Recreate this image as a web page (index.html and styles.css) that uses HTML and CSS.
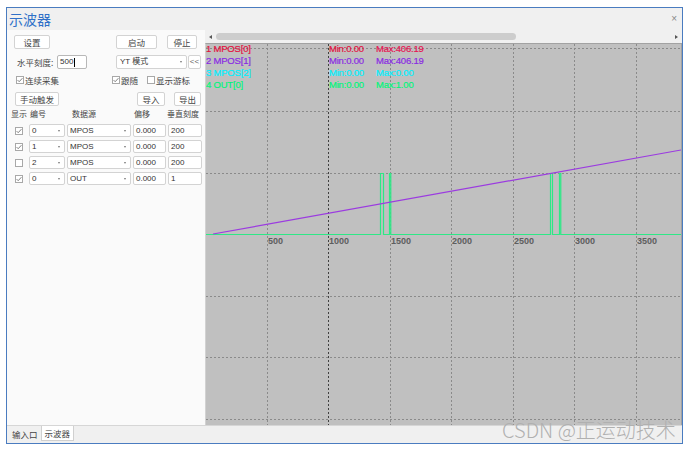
FILE: index.html
```html
<!DOCTYPE html>
<html lang="zh">
<head>
<meta charset="utf-8">
<title>示波器</title>
<link rel="stylesheet" href="styles.css">
</head>
<body>
<div class="window">
  <div class="titlebar">
    <span class="title">示波器</span>
    <span class="close">×</span>
  </div>
  <div class="main">
    <div class="panel">
      <div class="row row1">
        <span class="btn b-set">设置</span>
        <span class="btn b-start">启动</span>
        <span class="btn b-stop">停止</span>
      </div>
      <div class="row row2">
        <span class="lbl">水平刻度:</span>
        <span class="input in-scale">500<i class="caret"></i></span>
        <span class="select sel-mode">YT 模式<i class="arr"></i></span>
        <span class="btn b-collapse">&lt;&lt;</span>
      </div>
      <div class="row row3">
        <label class="chk c-cont"><svg class="cb" width="8" height="8" viewBox="0 0 8 8"><rect x="0.5" y="0.5" width="7" height="7" fill="#fff" stroke="#a8a8a8"/><path d="M1.6 4.1 L3.2 5.7 L6.4 2.2" fill="none" stroke="#707070" stroke-width="0.9"/></svg>连续采集</label>
        <label class="chk c-follow"><svg class="cb" width="8" height="8" viewBox="0 0 8 8"><rect x="0.5" y="0.5" width="7" height="7" fill="#fff" stroke="#a8a8a8"/><path d="M1.6 4.1 L3.2 5.7 L6.4 2.2" fill="none" stroke="#707070" stroke-width="0.9"/></svg>跟随</label>
        <label class="chk c-cursor"><svg class="cb" width="8" height="8" viewBox="0 0 8 8"><rect x="0.5" y="0.5" width="7" height="7" fill="#fff" stroke="#a8a8a8"/></svg>显示游标</label>
      </div>
      <div class="row row4">
        <span class="btn b-trig">手动触发</span>
        <span class="btn b-imp">导入</span>
        <span class="btn b-exp">导出</span>
      </div>
      <div class="grid head">
        <span class="h h1">显示</span>
        <span class="h h2">编号</span>
        <span class="h h3">数据源</span>
        <span class="h h4">偏移</span>
        <span class="h h5">垂直刻度</span>
      </div>
      <div class="grid rows">
        <span class="cbcell"><svg width="8" height="8" viewBox="0 0 8 8"><rect x="0.5" y="0.5" width="7" height="7" fill="#fff" stroke="#a8a8a8"/><path d="M1.6 4.1 L3.2 5.7 L6.4 2.2" fill="none" stroke="#707070" stroke-width="0.9"/></svg></span>
        <span class="select">0<i class="arr"></i></span>
        <span class="select">MPOS<i class="arr"></i></span>
        <span class="input">0.000</span>
        <span class="input">200</span>

        <span class="cbcell"><svg width="8" height="8" viewBox="0 0 8 8"><rect x="0.5" y="0.5" width="7" height="7" fill="#fff" stroke="#a8a8a8"/><path d="M1.6 4.1 L3.2 5.7 L6.4 2.2" fill="none" stroke="#707070" stroke-width="0.9"/></svg></span>
        <span class="select">1<i class="arr"></i></span>
        <span class="select">MPOS<i class="arr"></i></span>
        <span class="input">0.000</span>
        <span class="input">200</span>

        <span class="cbcell"><svg width="8" height="8" viewBox="0 0 8 8"><rect x="0.5" y="0.5" width="7" height="7" fill="#fff" stroke="#a8a8a8"/></svg></span>
        <span class="select">2<i class="arr"></i></span>
        <span class="select">MPOS<i class="arr"></i></span>
        <span class="input">0.000</span>
        <span class="input">200</span>

        <span class="cbcell"><svg width="8" height="8" viewBox="0 0 8 8"><rect x="0.5" y="0.5" width="7" height="7" fill="#fff" stroke="#a8a8a8"/><path d="M1.6 4.1 L3.2 5.7 L6.4 2.2" fill="none" stroke="#707070" stroke-width="0.9"/></svg></span>
        <span class="select">0<i class="arr"></i></span>
        <span class="select">OUT<i class="arr"></i></span>
        <span class="input">0.000</span>
        <span class="input">1</span>
      </div>
    </div>
    <div class="scope">
      <div class="scrollrow">
        <i class="sarrow left"></i>
        <span class="thumb"></span>
        <i class="sarrow right"></i>
      </div>
      <div class="chart">
        <svg class="plot" width="475" height="381" viewBox="0 0 475 381">
          <g stroke="#8a8a8a" stroke-width="1" stroke-dasharray="2 2" fill="none">
            <line x1="0" y1="4.5" x2="475" y2="4.5"/>
            <line x1="0" y1="67.5" x2="475" y2="67.5"/>
            <line x1="0" y1="129.5" x2="475" y2="129.5"/>
            <line x1="0" y1="252.5" x2="475" y2="252.5"/>
            <line x1="0" y1="313.5" x2="475" y2="313.5"/>
            <line x1="0" y1="375.5" x2="475" y2="375.5"/>
            <line x1="61.5" y1="0" x2="61.5" y2="381"/>
            <line x1="184.5" y1="0" x2="184.5" y2="381"/>
            <line x1="245.5" y1="0" x2="245.5" y2="381"/>
            <line x1="307.5" y1="0" x2="307.5" y2="381"/>
            <line x1="368.5" y1="0" x2="368.5" y2="381"/>
            <line x1="430.5" y1="0" x2="430.5" y2="381"/>
          </g>
          <line x1="122.5" y1="0" x2="122.5" y2="381" stroke="#404040" stroke-dasharray="2 2"/>
          <polyline fill="none" stroke="#2ee886" stroke-width="1.2" points="0,190.5 174.5,190.5 174.5,129.5 177.5,129.5 177.5,190.5 183.5,190.5 183.5,129.5 184.8,129.5 184.8,190.5 344.5,190.5 344.5,129.5 346.5,129.5 346.5,190.5 353.5,190.5 353.5,129.5 354.8,129.5 354.8,190.5 475,190.5"/>
          <line x1="7" y1="190" x2="475" y2="106" stroke="#9b3be0" stroke-width="1.2"/>
          <g class="ax" fill="#5e5e5e">
            <text x="62" y="199.5">500</text>
            <text x="123" y="199.5">1000</text>
            <text x="185" y="199.5">1500</text>
            <text x="246" y="199.5">2000</text>
            <text x="308" y="199.5">2500</text>
            <text x="369" y="199.5">3000</text>
            <text x="431" y="199.5">3500</text>
          </g>
          <g class="lg">
            <text x="0" y="7.5" fill="#e2123f" stroke="#e2123f">1 MPOS[0]</text>
            <text x="123" y="7.5" fill="#e2123f" stroke="#e2123f">Min:0.00</text>
            <text x="170" y="7.5" fill="#e61552" stroke="#e61552">Max:406.19</text>
            <text x="0" y="19.5" fill="#8a2be2" stroke="#8a2be2">2 MPOS[1]</text>
            <text x="123" y="19.5" fill="#8a2be2" stroke="#8a2be2">Min:0.00</text>
            <text x="170" y="19.5" fill="#8a2be2" stroke="#8a2be2">Max:406.19</text>
            <text x="0" y="31.5" fill="#00f0ff" stroke="#00f0ff">3 MPOS[2]</text>
            <text x="123" y="31.5" fill="#00f0ff" stroke="#00f0ff">Min:0.00</text>
            <text x="170" y="31.5" fill="#00f0ff" stroke="#00f0ff">Max:0.00</text>
            <text x="0" y="43.5" fill="#00f57a" stroke="#00f57a">4 OUT[0]</text>
            <text x="123" y="43.5" fill="#00f57a" stroke="#00f57a">Min:0.00</text>
            <text x="170" y="43.5" fill="#00f57a" stroke="#00f57a">Max:1.00</text>
          </g>
        </svg>
      </div>
    </div>
  </div>
  <div class="tabs">
    <span class="tab">输入口</span>
    <span class="tab active">示波器</span>
  </div>
</div>
<div class="watermark">CSDN @正运动技术</div>
</body>
</html>
```
FILE: styles.css
```css
* { box-sizing: border-box; }
html, body { margin: 0; padding: 0; background: #fff; }
body {
  font-family: "Liberation Sans", "Noto Sans CJK SC", sans-serif;
  font-size: 9px;
  color: #333;
  position: relative;
  width: 690px;
  height: 451px;
  overflow: hidden;
}
.window {
  margin: 7px 0 0 6px;
  width: 677px;
  height: 437px;
  border: 1px solid #4a7cc0;
  background: #f0f0f0;
  display: flex;
  flex-direction: column;
}
.titlebar {
  height: 22px;
  display: flex;
  align-items: center;
  flex: none;
}
.title {
  margin-left: 2px;
  font-family: "Noto Sans CJK SC", sans-serif;
  font-size: 14px;
  color: #2f70c8;
  line-height: 1;
}
.close {
  margin-left: auto;
  margin-right: 5px;
  font-size: 10px;
  color: #888;
  line-height: 1;
}
.main {
  height: 395px;
  display: flex;
  flex: none;
}
.panel {
  width: 198px;
  background: #fafafa;
  display: flex;
  flex-direction: column;
  padding-top: 5px;
}
.row {
  display: flex;
  align-items: center;
  height: 14px;
  flex: none;
}
.row2, .row4 { margin-top: 6px; }
.row3 { margin-top: 5px; height: 12px; }
.row4 { margin-top: 6px; }
.btn {
  display: flex;
  align-items: center;
  justify-content: center;
  height: 14px;
  background: #fff;
  border: 1px solid #d3d3d3;
  border-radius: 2px;
  font-family: "Noto Sans CJK SC", sans-serif;
  font-size: 8.5px;
  color: #444;
  line-height: 1;
}
.b-set { margin-left: 7px; width: 36px; }
.b-start { margin-left: 66px; width: 41px; }
.b-stop { margin-left: 10px; width: 30px; }
.lbl {
  margin-left: 10px;
  width: 40px;
  font-family: "Noto Sans CJK SC", sans-serif;
  font-size: 8.5px;
  color: #444;
}
.input, .select {
  position: relative;
  display: flex;
  align-items: center;
  height: 14px;
  background: #fff;
  border: 1px solid #d3d3d3;
  border-radius: 2px;
  padding-left: 2px;
  font-size: 8px;
  color: #333;
  line-height: 1;
  white-space: nowrap;
}
.in-scale { width: 30px; border-color: #b8b8b8; }
.caret {
  display: inline-block;
  width: 1px;
  height: 9px;
  background: #000;
  margin-left: 1px;
}
.select .arr {
  position: absolute;
  right: 4px;
  top: 5px;
  width: 0;
  height: 0;
  border-left: 1.5px solid transparent;
  border-right: 1.5px solid transparent;
  border-top: 2px solid #777;
}
.sel-mode {
  margin-left: 29px;
  width: 71px;
  padding-left: 3px;
  font-family: "Liberation Sans", "Noto Sans CJK SC", sans-serif;
}
.b-collapse {
  margin-left: 1px;
  width: 13px;
  font-family: "Liberation Sans", sans-serif;
  font-size: 8px;
  color: #666;
}
.chk {
  display: flex;
  align-items: center;
  font-family: "Noto Sans CJK SC", sans-serif;
  font-size: 8.5px;
  color: #444;
  white-space: nowrap;
}
.cb { margin-right: 1px; }
.c-cont { margin-left: 9px; }
.c-follow { margin-left: 53px; }
.c-cursor { margin-left: 9px; }
.b-trig { margin-left: 8px; width: 44px; }
.b-imp { margin-left: 78px; width: 28px; }
.b-exp { margin-left: 9px; width: 27px; }
.grid {
  display: grid;
  grid-template-columns: 17px 36px 64px 33px 34px;
  column-gap: 2px;
  padding-left: 3px;
}
.head {
  margin-top: 3px;
  height: 10px;
  align-items: center;
}
.h {
  font-family: "Noto Sans CJK SC", sans-serif;
  font-size: 8px;
  color: #444;
  white-space: nowrap;
  line-height: 10px;
}
.h1 { padding-left: 1px; }
.h2 { padding-left: 1px; }
.h3 { padding-left: 5px; }
.h4 { padding-left: 1px; }
.h5 { margin-left: -1px; }
.rows {
  margin-top: 5px;
  grid-auto-rows: 13px;
  row-gap: 3px;
}
.rows .input, .rows .select { height: 13px; }
.rows .select .arr { top: 5px; }
.cbcell {
  display: flex;
  align-items: center;
  justify-content: center;
}
.scope {
  width: 477px;
  display: flex;
  flex-direction: column;
}
.scrollrow {
  height: 13px;
  position: relative;
  display: flex;
  align-items: center;
  flex: none;
}
.sarrow {
  width: 0;
  height: 0;
  border-top: 2.5px solid transparent;
  border-bottom: 2.5px solid transparent;
}
.sarrow.left {
  margin-left: 4px;
  border-right: 3px solid #555;
}
.thumb {
  margin-left: 4px;
  width: 300px;
  height: 7px;
  border-radius: 3.5px;
  background: #cdcdcd;
}
.sarrow.right {
  margin-left: auto;
  margin-right: 4px;
  border-left: 3px solid #555;
}
.chart {
  height: 382px;
  background: #c0c0c0;
  border-top: 1px solid #a2a2a2;
  border-left: 1px solid #d2d2d2;
  border-right: 1px solid #a2a2a2;
  overflow: hidden;
  flex: none;
}
.plot { display: block; }
.ax text {
  font-family: "Liberation Sans", sans-serif;
  font-size: 9px;
  font-weight: bold;
}
.lg text {
  font-family: "Liberation Sans", sans-serif;
  font-size: 9.5px;
  letter-spacing: -0.2px;
  stroke-width: 0.2px;
}
.tabs {
  height: 18px;
  flex: none;
  display: flex;
  align-items: flex-start;
  border-top: 1px solid #d6d6d6;
  padding-left: 3px;
}
.tab {
  display: flex;
  align-items: center;
  height: 15px;
  padding: 0 2px;
  font-family: "Noto Sans CJK SC", sans-serif;
  font-size: 8.5px;
  color: #444;
}
.tab.active {
  margin-left: 1px;
  background: #fff;
  border: 1px solid #d0d0d0;
  border-top: none;
  padding: 0 3px;
}
.watermark {
  position: absolute;
  left: 502px;
  top: 419px;
  font-family: "Noto Sans CJK SC", sans-serif;
  font-weight: 300;
  font-size: 20px;
  line-height: 22px;
  color: #b0b0b0;
  white-space: nowrap;
}
```
